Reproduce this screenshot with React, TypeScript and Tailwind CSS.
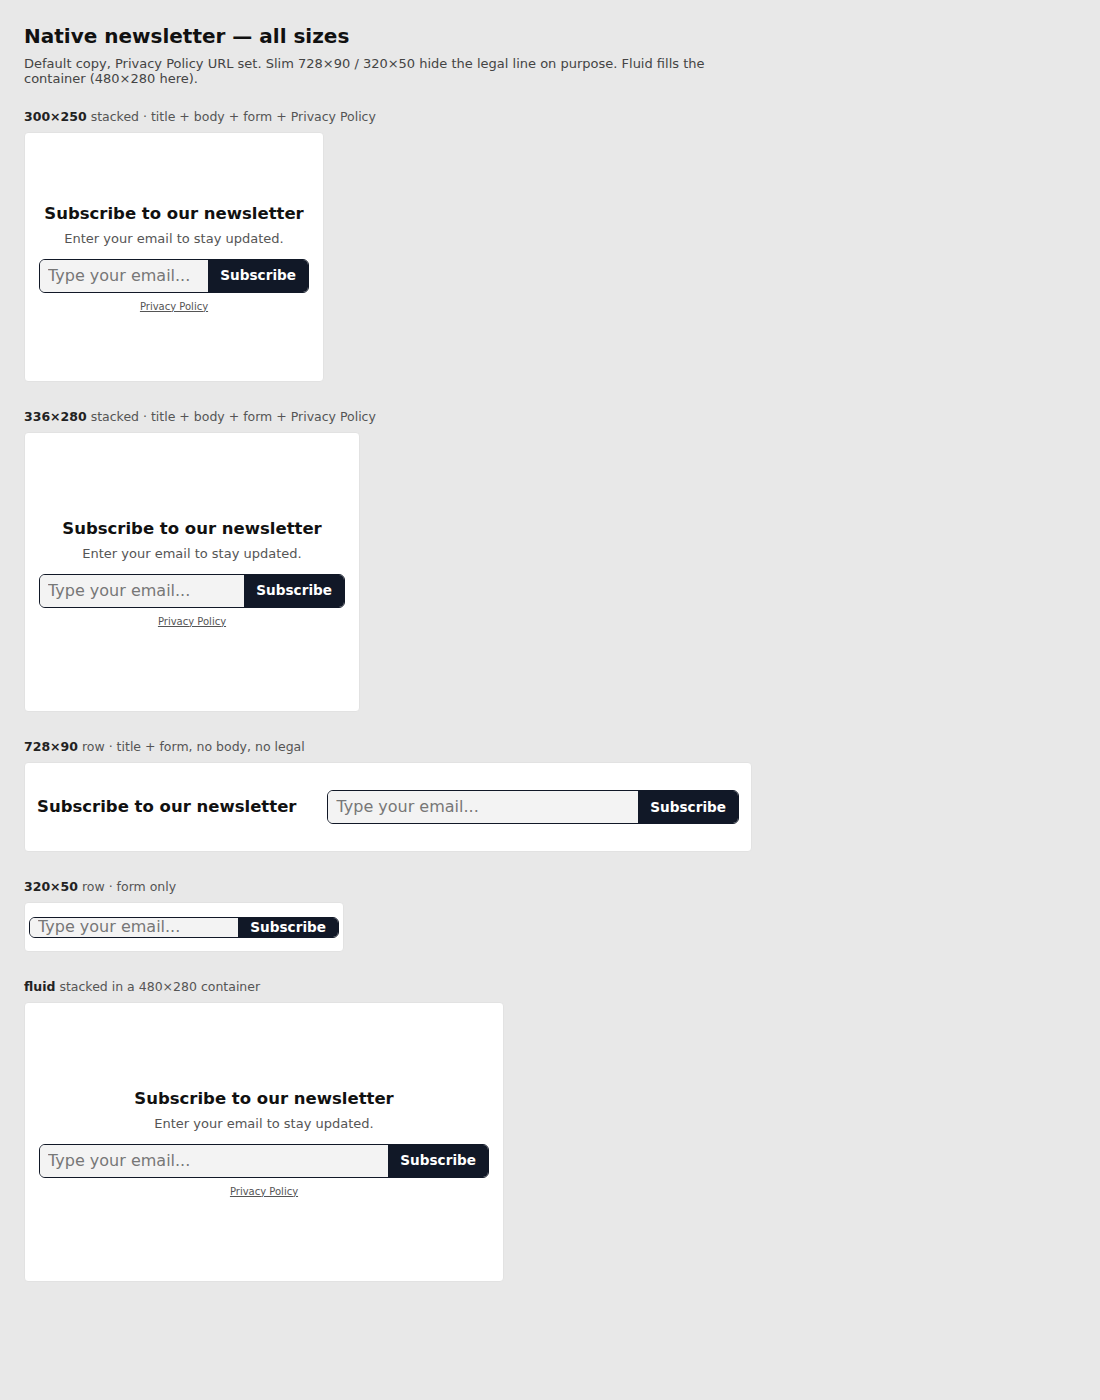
import React from "react";

type Variant = "stacked" | "row" | "slim";

const sizes: {
  label: string;
  note: string;
  variant: Variant;
  box: string;
}[] = [
  {
    label: "300×250",
    note: "stacked · title + body + form + Privacy Policy",
    variant: "stacked",
    box: "w-[300px] h-[250px]",
  },
  {
    label: "336×280",
    note: "stacked · title + body + form + Privacy Policy",
    variant: "stacked",
    box: "w-[336px] h-[280px]",
  },
  {
    label: "728×90",
    note: "row · title + form, no body, no legal",
    variant: "row",
    box: "w-[728px] h-[90px]",
  },
  {
    label: "320×50",
    note: "row · form only",
    variant: "slim",
    box: "w-[320px] h-[50px]",
  },
  {
    label: "fluid",
    note: "stacked in a 480×280 container",
    variant: "stacked",
    box: "w-[480px] h-[280px]",
  },
];

function EmailForm({ slim }: { slim?: boolean }) {
  return (
    <form
      className={
        "flex w-full overflow-hidden rounded-[6px] border border-[#111827] bg-[#f3f3f3] " +
        (slim ? "h-[21px]" : "h-[34px]")
      }
      onSubmit={(e) => e.preventDefault()}
    >
      <input
        type="email"
        placeholder="Type your email..."
        className="min-w-0 flex-1 bg-[#f3f3f3] px-2 text-[16px] text-[#111] outline-none placeholder:text-[#777]"
      />
      <button
        type="submit"
        className={
          "shrink-0 bg-[#111827] px-3 text-[13.6px] font-bold text-white " +
          (slim ? "leading-[14px]" : "")
        }
      >
        Subscribe
      </button>
    </form>
  );
}

function NewsletterCard({ item }: { item: (typeof sizes)[number] }) {
  if (item.variant === "row") {
    return (
      <div
        className={`${item.box} flex items-center gap-[31px] rounded border border-[#e2e2e2] bg-white px-3`}
      >
        <h3 className="shrink-0 text-[16.5px] font-bold text-[#111]">
          Subscribe to our newsletter
        </h3>
        <EmailForm />
      </div>
    );
  }

  if (item.variant === "slim") {
    return (
      <div
        className={`${item.box} flex items-center rounded border border-[#e2e2e2] bg-white px-1`}
      >
        <EmailForm slim />
      </div>
    );
  }

  return (
    <div
      className={`${item.box} flex flex-col items-center justify-center rounded border border-[#e2e2e2] bg-white px-[14px] pt-[2px] text-center`}
    >
      <h3 className="text-[16.5px] font-bold leading-[20px] text-[#111]">
        Subscribe to our newsletter
      </h3>
      <p className="mt-[7px] text-[13px] leading-[15px] text-[#555]">
        Enter your email to stay updated.
      </p>
      <div className="mt-[13px] w-full">
        <EmailForm />
      </div>
      <a href="#" className="mt-[7px] text-[10px] leading-[13px] text-[#555] underline">
        Privacy Policy
      </a>
    </div>
  );
}

export default function App() {
  return (
    <div className="min-h-screen bg-[#e8e8e8] px-6 pb-6 pt-[25px] font-['DejaVu_Sans',sans-serif] text-[#111]">
      <h1 className="text-[20px] font-bold leading-[23px]">Native newsletter — all sizes</h1>
      <p className="mt-2 max-w-[720px] text-[13px] leading-[15px] text-[#444]">
        Default copy, Privacy Policy URL set. Slim 728×90 / 320×50 hide the legal line on
        purpose. Fluid fills the container (480×280 here).
      </p>

      <div className="mt-[22px] flex flex-col gap-[26px]">
        {sizes.map((item) => (
          <section key={item.label}>
            <p className="mb-[6px] text-[12.5px] leading-[18px] text-[#555]">
              <b className="text-[#222]">{item.label}</b> {item.note}
            </p>
            <NewsletterCard item={item} />
          </section>
        ))}
      </div>
    </div>
  );
}
